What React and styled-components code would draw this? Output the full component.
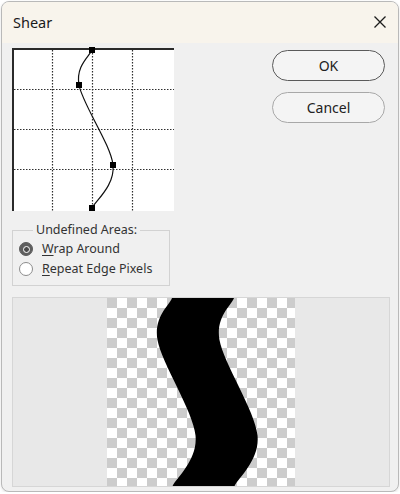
import React from 'react';
import styled, { createGlobalStyle } from 'styled-components';

const GlobalStyle = createGlobalStyle`
	html, body {
		margin: 0;
		padding: 0;
		background: #ffffff;
		font-family: 'Noto Sans', 'Open Sans', sans-serif;
	}
`;

// curve control points, in grid svg coordinates
const gridPoints = [
	[78, 0],
	[65, 35],
	[99, 115],
	[78, 158],
];

const catmull = (pts) => {
	let d = '';
	for (let i = 0; i < pts.length - 1; i++) {
		const p0 = pts[i - 1] || pts[i];
		const p1 = pts[i];
		const p2 = pts[i + 1];
		const p3 = pts[i + 2] || p2;
		const c1 = [p1[0] + (p2[0] - p0[0]) / 6, p1[1] + (p2[1] - p0[1]) / 6];
		const c2 = [p2[0] - (p3[0] - p1[0]) / 6, p2[1] - (p3[1] - p1[1]) / 6];
		d += ` C${c1[0]},${c1[1]} ${c2[0]},${c2[1]} ${p2[0]},${p2[1]}`;
	}
	return d;
};

const curvePath = `M${gridPoints[0][0]},${gridPoints[0][1]}` + catmull(gridPoints);

// same curve mapped onto the preview
const toPreview = (edgeX) =>
	gridPoints.map(([x, y]) => [edgeX + (x - 78) * 1.12, (y / 158) * 189]);

const leftEdge = toPreview(65);
const rightEdge = toPreview(127).reverse();
const shapePath =
	`M${leftEdge[0][0]},${leftEdge[0][1]}` +
	catmull(leftEdge) +
	` L${rightEdge[0][0]},${rightEdge[0][1]}` +
	catmull(rightEdge) +
	' Z';

const Shear = () => {
	return (
		<>
			<GlobalStyle />
			<Window>
				<TitleBar>
					<Title>Shear</Title>
					<CloseButton>
						<svg width='14' height='14' viewBox='0 0 14 14'>
							<path d='M1.5 1.5 L12.5 12.5 M12.5 1.5 L1.5 12.5' stroke='#1c1c1c' strokeWidth='1.3' />
						</svg>
					</CloseButton>
				</TitleBar>
				<Body>
					<TopRow>
						<LeftColumn>
							<Grid>
								<svg width='160' height='161' viewBox='0 0 160 161'>
									{[38.5, 78.5, 118.5].map((x) => (
										<line key={'v' + x} x1={x} y1='0' x2={x} y2='161' stroke='#2e2e2e' strokeWidth='1.2' strokeDasharray='1.5 1.5' />
									))}
									{[39.5, 79.5, 119.5].map((y) => (
										<line key={'h' + y} x1='0' y1={y} x2='160' y2={y} stroke='#2e2e2e' strokeWidth='1.2' strokeDasharray='1.5 1.5' />
									))}
									<path d={curvePath} fill='none' stroke='#111' strokeWidth='1.2' />
									{gridPoints.map(([x, y]) => (
										<rect key={x + '-' + y} x={x - 3} y={y - 3} width='6' height='6' fill='#000' />
									))}
								</svg>
							</Grid>
							<Group>
								<Legend>Undefined Areas:</Legend>
								<Option>
									<Radio checked />
									<span>
										<u>W</u>rap Around
									</span>
								</Option>
								<Option>
									<Radio />
									<span>
										<u>R</u>epeat Edge Pixels
									</span>
								</Option>
							</Group>
						</LeftColumn>
						<Buttons>
							<Button primary>OK</Button>
							<Button>Cancel</Button>
						</Buttons>
					</TopRow>
					<Preview>
						<Checker>
							<svg width='188' height='189' viewBox='0 0 188 189'>
								<path d={shapePath} fill='#000' />
							</svg>
						</Checker>
					</Preview>
				</Body>
			</Window>
		</>
	);
};

const Window = styled.div`
	box-sizing: border-box;
	width: 398px;
	height: 491px;
	margin: 1px 0 0 1px;
	border: 1px solid #b9b9b9;
	border-radius: 8px;
	overflow: hidden;
	background: #f0f0f0;
	display: flex;
	flex-direction: column;
	box-shadow: 0 1px 3px rgba(0, 0, 0, 0.12);
`;

const TitleBar = styled.div`
	height: 40px;
	flex: none;
	background: #f8f4ec;
	display: flex;
	align-items: center;
	justify-content: space-between;
	padding: 0 11px 1px 11px;
`;

const Title = styled.div`
	font-size: 14.5px;
	color: #1a1a1a;
`;

const CloseButton = styled.div`
	width: 14px;
	height: 14px;
	display: flex;
`;

const Body = styled.div`
	flex: 1;
	padding: 5px 8px 0 10px;
	display: flex;
	flex-direction: column;
`;

const TopRow = styled.div`
	display: flex;
	justify-content: space-between;
`;

const LeftColumn = styled.div`
	display: flex;
	flex-direction: column;
`;

const Grid = styled.div`
	width: 160px;
	height: 161px;
	background: #ffffff;
	border-top: 2px solid #2a2a2a;
	border-left: 2px solid #2a2a2a;
	svg {
		display: block;
		overflow: visible;
	}
`;

const Group = styled.fieldset`
	box-sizing: border-box;
	width: 158px;
	height: 64px;
	margin: 11px 0 0 0;
	padding: 2px 0 0 6px;
	border: 1px solid #d2d2d2;
	display: flex;
	flex-direction: column;
	gap: 2px;
`;

const Legend = styled.legend`
	font-size: 12.5px;
	color: #333;
	padding: 0 3px;
	margin-left: 14px;
	line-height: 16px;
`;

const Option = styled.label`
	display: flex;
	align-items: center;
	gap: 9px;
	font-size: 12.5px;
	color: #333;
	line-height: 18px;
	u {
		text-decoration-thickness: 1px;
		text-underline-offset: 2px;
	}
`;

const Radio = styled.span`
	box-sizing: border-box;
	width: 14px;
	height: 14px;
	border-radius: 50%;
	flex: none;
	display: flex;
	align-items: center;
	justify-content: center;
	background: ${(p) => (p.checked ? '#5e5e5e' : '#ffffff')};
	border: 1px solid ${(p) => (p.checked ? '#5e5e5e' : '#8c8c8c')};
	&::after {
		content: '';
		display: ${(p) => (p.checked ? 'block' : 'none')};
		box-sizing: border-box;
		width: 7px;
		height: 7px;
		border-radius: 50%;
		background: #4a4a4a;
		border: 1.5px solid #ffffff;
	}
`;

const Buttons = styled.div`
	display: flex;
	flex-direction: column;
	gap: 11px;
	margin: 2px 5px 0 0;
`;

const Button = styled.div`
	box-sizing: border-box;
	width: 113px;
	height: 31px;
	border-radius: 16px;
	border: ${(p) => (p.primary ? '1.5px solid #5a5a5a' : '1px solid #a8a8a8')};
	background: #f4f4f4;
	display: flex;
	align-items: center;
	justify-content: center;
	font-size: 14px;
	color: #222;
`;

const Preview = styled.div`
	box-sizing: border-box;
	margin-top: 11px;
	width: 378px;
	height: 190px;
	border: 1px solid #d6d6d6;
	background: #e8e8e8;
	display: flex;
	justify-content: center;
`;

const Checker = styled.div`
	width: 188px;
	height: 188px;
	background-color: #ffffff;
	background-image: linear-gradient(45deg, #cccccc 25%, transparent 25%, transparent 75%, #cccccc 75%),
		linear-gradient(45deg, #cccccc 25%, transparent 25%, transparent 75%, #cccccc 75%);
	background-size: 20px 20px;
	background-position: 10px 0, 0 10px;
	overflow: hidden;
	svg {
		display: block;
	}
`;

export default Shear;
